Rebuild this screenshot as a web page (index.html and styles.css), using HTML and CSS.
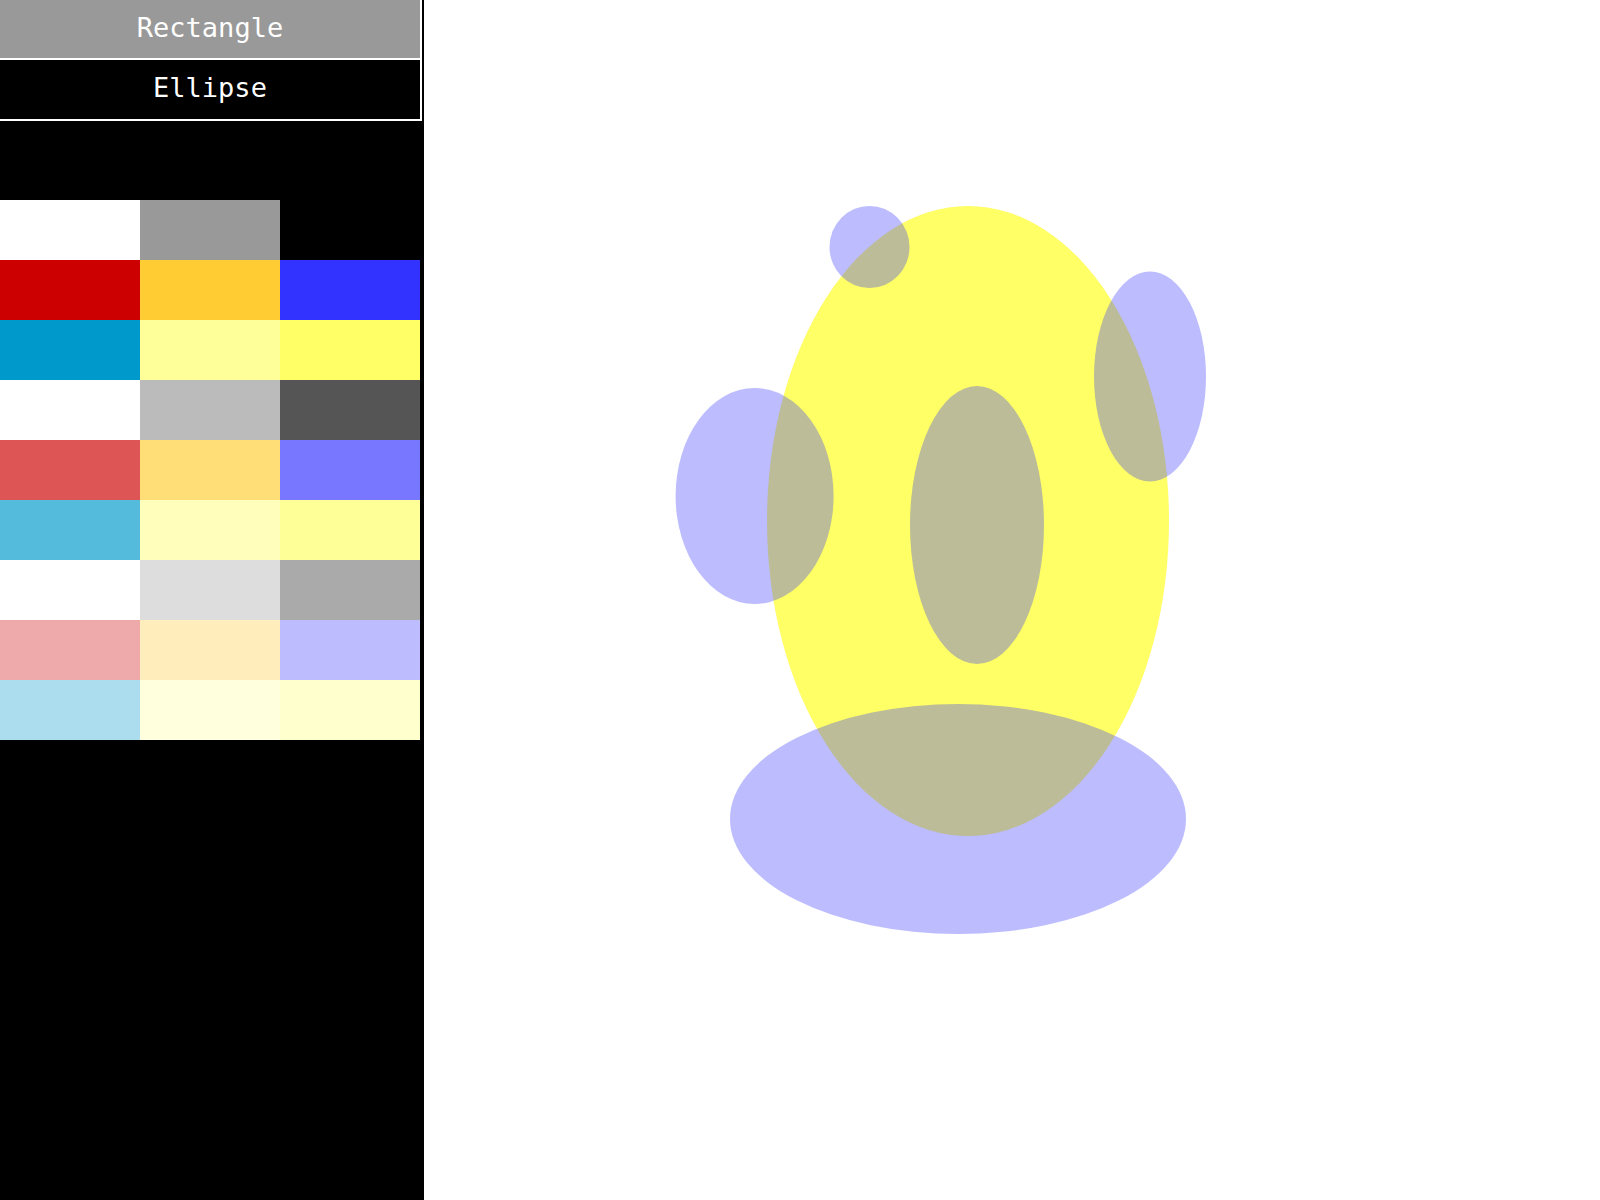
FILE: index.html
```html
<!DOCTYPE html>
<html>
<head>
<meta charset="utf-8">
<link rel="stylesheet" href="styles.css">
</head>
<body>
<div class="app">
  <aside class="sidebar">
    <div class="tool tool-active">Rectangle</div>
    <div class="tool tool-second">Ellipse</div>
    <div class="palette">
      <div class="sw" style="background:#ffffff"></div>
      <div class="sw" style="background:#999999"></div>
      <div class="sw" style="background:#000000"></div>
      <div class="sw" style="background:#cc0000"></div>
      <div class="sw" style="background:#ffcc33"></div>
      <div class="sw" style="background:#3333ff"></div>
      <div class="sw" style="background:#0099cc"></div>
      <div class="sw" style="background:#ffff99"></div>
      <div class="sw" style="background:#ffff66"></div>
      <div class="sw" style="background:#ffffff"></div>
      <div class="sw" style="background:#bbbbbb"></div>
      <div class="sw" style="background:#555555"></div>
      <div class="sw" style="background:#dd5555"></div>
      <div class="sw" style="background:#ffdd77"></div>
      <div class="sw" style="background:#7777ff"></div>
      <div class="sw" style="background:#54bbdd"></div>
      <div class="sw" style="background:#ffffbb"></div>
      <div class="sw" style="background:#ffff98"></div>
      <div class="sw" style="background:#ffffff"></div>
      <div class="sw" style="background:#dddddd"></div>
      <div class="sw" style="background:#aaaaaa"></div>
      <div class="sw" style="background:#eeaaaa"></div>
      <div class="sw" style="background:#ffeebc"></div>
      <div class="sw" style="background:#bcbcff"></div>
      <div class="sw" style="background:#abddee"></div>
      <div class="sw" style="background:#ffffdd"></div>
      <div class="sw" style="background:#ffffcd"></div>
    </div>
  </aside>
  <main class="canvas">
    <svg class="drawing" width="1176" height="1200" viewBox="0 0 1176 1200">
      <ellipse class="shape-yellow" cx="544" cy="521" rx="201" ry="315"/>
      <ellipse class="shape-blue" cx="445.5" cy="247" rx="40" ry="41"/>
      <ellipse class="shape-blue" cx="726" cy="376.5" rx="56" ry="105"/>
      <ellipse class="shape-blue" cx="330.6" cy="496" rx="79" ry="108"/>
      <ellipse class="shape-blue" cx="553" cy="525" rx="67" ry="139"/>
      <ellipse class="shape-blue" cx="534" cy="819" rx="228" ry="115"/>
    </svg>
  </main>
</div>
</body>
</html>
```
FILE: styles.css
```css
html, body {
  margin: 0;
  padding: 0;
  background: #ffffff;
}
.app {
  display: flex;
  width: 1600px;
  height: 1200px;
  overflow: hidden;
}
.sidebar {
  width: 424px;
  flex: 0 0 424px;
  height: 1200px;
  background: #000000;
  display: flex;
  flex-direction: column;
}
.tool {
  width: 420px;
  height: 54px;
  padding-bottom: 4px;
  border-right: 2px solid #ffffff;
  border-bottom: 2px solid #ffffff;
  background: #000000;
  color: #ffffff;
  font-family: "DejaVu Sans Mono", monospace;
  font-size: 27px;
  display: flex;
  align-items: center;
  justify-content: center;
  box-sizing: content-box;
  flex: 0 0 auto;
}
.tool-active {
  background: #999999;
}
.tool-second {
  height: 55px;
}
.palette {
  margin-top: 79px;
  width: 420px;
  display: grid;
  grid-template-columns: repeat(3, 140px);
  grid-auto-rows: 60px;
}
.canvas {
  flex: 1;
  background: #ffffff;
  position: relative;
}
.drawing {
  display: block;
}
.shape-yellow {
  fill: #ffff66;
}
.shape-blue {
  fill: #3333ff;
  fill-opacity: 0.33;
}
```
